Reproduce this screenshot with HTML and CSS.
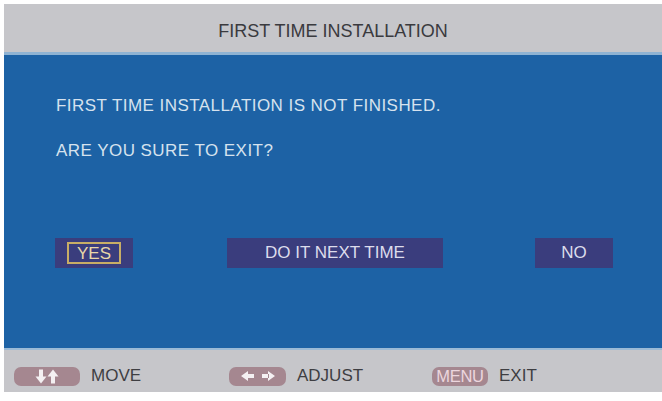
FILE: index.html
```html
<!DOCTYPE html>
<html>
<head>
<meta charset="utf-8">
<link rel="stylesheet" href="styles.css">
</head>
<body>
<div class="screen">
  <div class="header">FIRST TIME INSTALLATION</div>
  <div class="main">
    <p class="msg">FIRST TIME INSTALLATION IS NOT FINISHED.</p>
    <p class="msg second">ARE YOU SURE TO EXIT?</p>
    <div class="buttons">
      <div class="btn yes"><span class="focus">YES</span></div>
      <div class="btn later">DO IT NEXT TIME</div>
      <div class="btn no">NO</div>
    </div>
  </div>
  <div class="footer">
    <div class="hint move">
      <span class="pill p1">
        <svg width="34" height="17" viewBox="0 0 34 17">
          <path d="M11 1.5v8" stroke="#f4f0f2" stroke-width="4"/>
          <path d="M5.5 8.5L11 15.5 16.5 8.5z" fill="#f4f0f2"/>
          <path d="M23 15.5v-8" stroke="#f4f0f2" stroke-width="4"/>
          <path d="M17.5 8.5L23 1.5 28.5 8.5z" fill="#f4f0f2"/>
        </svg>
      </span>
      <span class="label">MOVE</span>
    </div>
    <div class="hint adjust">
      <span class="pill p2">
        <svg width="38" height="14" viewBox="0 0 38 14">
          <path d="M2 7L9 2v10z M8 5h7v4H8z" fill="#f4f0f2"/>
          <path d="M36 7L29 2v10z M23 5h7v4h-7z" fill="#f4f0f2"/>
        </svg>
      </span>
      <span class="label">ADJUST</span>
    </div>
    <div class="hint exit">
      <span class="pill p3">MENU</span>
      <span class="label">EXIT</span>
    </div>
  </div>
</div>
</body>
</html>
```
FILE: styles.css
```css
html, body {
  margin: 0;
  padding: 0;
  background: #ffffff;
  font-family: "Liberation Sans", Arial, sans-serif;
}
.screen {
  margin: 4px 0 0 4px;
  width: 658px;
  display: flex;
  flex-direction: column;
}
.header {
  height: 48px;
  background: #c6c6ca;
  color: #3a3a3e;
  font-size: 18px;
  letter-spacing: 0;
  text-align: center;
  line-height: 54px;
  border-bottom: 3px solid #8fb3d3;
}
.main {
  height: 295px;
  background: #1d62a5;
  padding: 41px 0 0 0;
  box-sizing: border-box;
  display: flex;
  flex-direction: column;
  border-bottom: 2px solid #9bbad6;
}
.msg {
  margin: 0 0 0 52px;
  line-height: 20px;
  font-size: 17px;
  color: #d6e2ee;
  letter-spacing: 0.45px;
}
.msg.second {
  margin-top: 25px;
}
.buttons {
  display: flex;
  margin-top: 77px;
  padding-left: 51px;
}
.btn {
  height: 30px;
  background: #3a3d7d;
  color: #dcdcec;
  font-size: 17px;
  display: flex;
  align-items: center;
  justify-content: center;
}
.btn.yes {
  width: 78px;
}
.focus {
  border: 2px solid #c8ae66;
  color: #e8d8a8;
  width: 50px;
  height: 18px;
  line-height: 19px;
  text-align: center;
}
.btn.later {
  width: 216px;
  margin-left: 94px;
}
.btn.no {
  width: 78px;
  margin-left: 92px;
}
.footer {
  height: 42px;
  background: #c6c6ca;
  display: flex;
  align-items: center;
  padding: 10px 0 0 10px;
  box-sizing: border-box;
}
.hint {
  display: flex;
  align-items: center;
}
.move { width: 215px; }
.adjust { width: 203px; }
.pill {
  height: 19px;
  border-radius: 7px;
  background: #a58790;
  display: flex;
  align-items: center;
  justify-content: center;
}
.p1 { width: 66px; }
.p2 { width: 57px; }
.p3 {
  width: 56px;
  color: #ecd6de;
  font-size: 16.5px;
  letter-spacing: -0.3px;
}
.label {
  margin-left: 11px;
  font-size: 17px;
  color: #3e3e42;
}
```
